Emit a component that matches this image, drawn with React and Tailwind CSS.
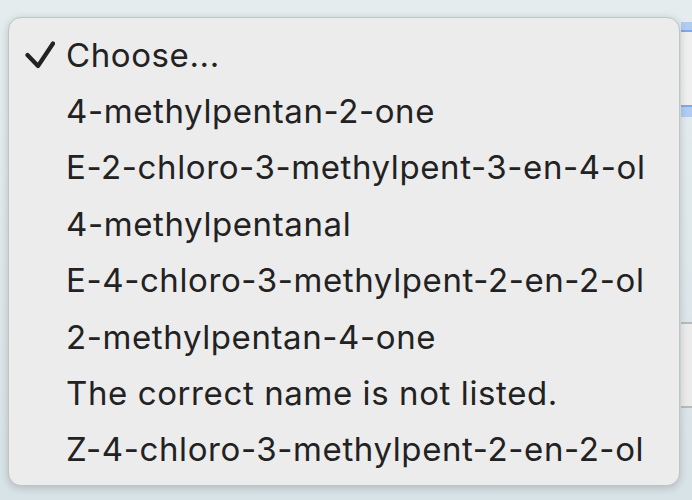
import { Fragment } from "react"

let options = [
	"Choose...",
	"4-methylpentan-2-one",
	"E-2-chloro-3-methylpent-3-en-4-ol",
	"4-methylpentanal",
	"E-4-chloro-3-methylpent-2-en-2-ol",
	"2-methylpentan-4-one",
	"The correct name is not listed.",
	"Z-4-chloro-3-methylpent-2-en-2-ol",
]

let Check = () => (
	<svg width="30" height="28" viewBox="0 0 30 28" className="text-[#222]">
		<path
			d="M2.5 14 L13 25 L28 2.5"
			fill="none"
			stroke="currentColor"
			strokeWidth="4.2"
			strokeLinecap="round"
			strokeLinejoin="round"
		/>
	</svg>
)

let App = () => {
	let selected = 0

	return (
		<div className="relative w-[692px] h-[500px] overflow-hidden bg-gradient-to-b from-[#e4ecee] to-[#d8e3e7]">
			{/* form controls behind the open menu */}
			<div className="ml-[681px] pt-[22px] flex flex-col">
				<div className="w-[120px] h-[95px] bg-[#b2cbf1] pt-[8px] pb-[10px]">
					<div className="h-full bg-[#efefef] border-y-2 border-[#7fa8ea]" />
				</div>
				<div className="mt-[205px] w-[120px] h-[86px] bg-[#ebebeb] border-y-2 border-[#b7bbbe]" />
			</div>

			{/* the open select menu */}
			<div
				className="absolute left-[8px] top-[17px] w-[672px] h-[469px] bg-[#ececec] rounded-[13px] border border-[#bfc4c7] shadow-[0_2px_8px_rgba(0,0,0,0.18)] pt-[9px]"
				style={{ fontFamily: "Inter, 'Liberation Sans', sans-serif" }}
			>
				{options.map((opt, i) => (
					<Fragment key={i}>
						<div className="h-[56.4px] flex items-center text-[#222] text-[33px] leading-none tracking-[0.6px]">
							<div className="w-[57px] pl-[16px] flex">
								{i === selected && <Check />}
							</div>
							<span>{opt}</span>
						</div>
					</Fragment>
				))}
			</div>
		</div>
	)
}

export default App
